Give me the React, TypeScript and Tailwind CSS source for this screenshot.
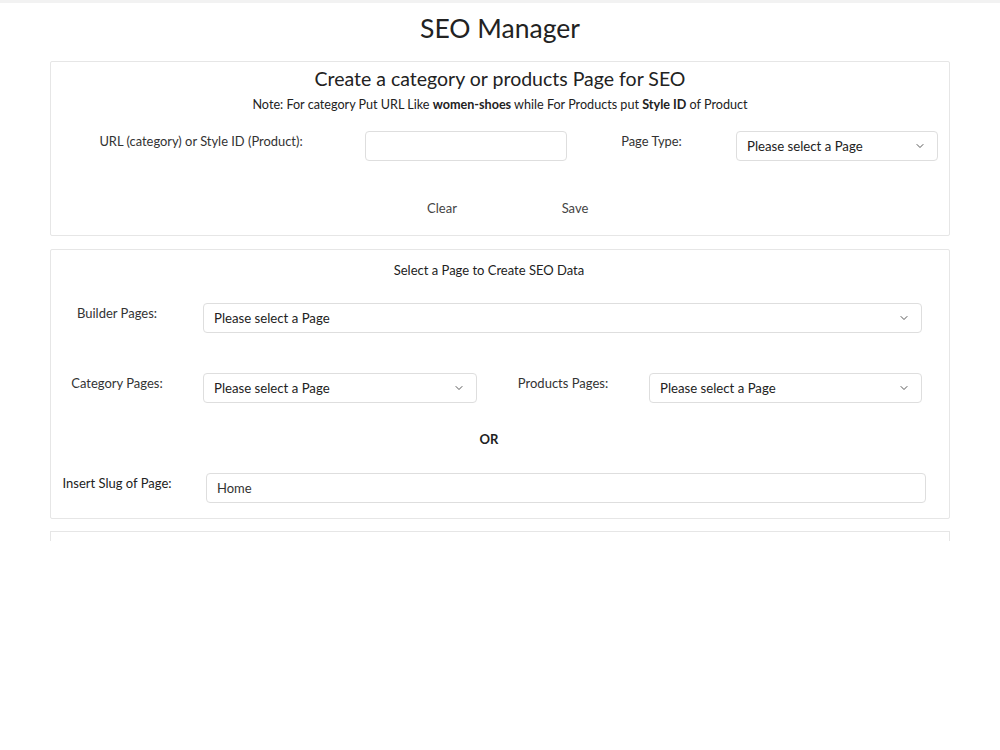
import { ChevronDown } from "lucide-react";

const font = { fontFamily: "Lato, 'Noto Sans', sans-serif" };

function Select({ className = "" }: { className?: string }) {
    return (
        <div className={`h-[30px] border border-[#dedede] rounded-[4px] bg-white flex items-center justify-between pl-[10px] pr-[11px] ${className}`}>
            <span className="text-[13.2px] text-[#222] pt-[1px]">Please select a Page</span>
            <ChevronDown size={12} strokeWidth={1.8} className="text-[#444]" />
        </div>
    );
}

export default function App() {
    return (
        <div className="w-[1000px] min-h-[750px] bg-white text-[#333]" style={font}>
            <div className="h-[3px] bg-[#f2f2f2]" />

            <h1 className="text-center text-[26.5px] leading-[34px] text-[#222] mt-[8px] mb-[16px]">SEO Manager</h1>

            <div className="mx-[50px]">
                {/* Create page card */}
                <div className="border border-[#e6e6e6] rounded-[2px] px-[11px] pt-[3px] pb-[17px]">
                    <h2 className="text-center text-[19.5px] leading-[28px] text-[#222]">Create a category or products Page for SEO</h2>
                    <p className="text-center text-[12.6px] leading-[16px] text-[#222] mt-[4px]">
                        Note: For category Put URL Like <b>women-shoes</b> while For Products put <b>Style ID</b> of Product
                    </p>

                    <div className="flex mt-[18px]">
                        <div className="w-[278px] mr-[25px] text-center text-[12.9px] leading-[21px]">URL (category) or Style ID (Product):</div>
                        <div className="w-[202px] h-[30px] border border-[#dedede] rounded-[4px]" />
                        <div className="w-[169px] text-center text-[12.9px] leading-[21px]">Page Type:</div>
                        <Select className="w-[202px]" />
                    </div>

                    <div className="flex justify-center pl-[17px] mt-[37px] gap-[53px] text-[13px] leading-[20px] text-[#444]">
                        <button className="w-[80px] text-center">Clear</button>
                        <button className="w-[80px] text-center">Save</button>
                    </div>
                </div>

                {/* Select page card */}
                <div className="border border-[#e6e6e6] rounded-[2px] mt-[13px] px-[11px] pt-[12px] pb-[15px]">
                    <p className="text-center text-[13px] leading-[16px] text-[#222] pr-[22px]">Select a Page to Create SEO Data</p>

                    <div className="flex mt-[25px]">
                        <div className="w-[110px] text-center text-[13px] leading-[21px]">Builder Pages:</div>
                        <Select className="ml-[31px] w-[719px]" />
                    </div>

                    <div className="flex mt-[40px]">
                        <div className="w-[110px] text-center text-[13px] leading-[21px]">Category Pages:</div>
                        <Select className="ml-[31px] w-[274px]" />
                        <div className="w-[172px] text-center text-[13px] leading-[21px]">Products Pages:</div>
                        <Select className="w-[273px]" />
                    </div>

                    <div className="text-center text-[13px] leading-[20px] font-bold text-[#222] mt-[26px] pr-[22px]">OR</div>

                    <div className="flex mt-[24px]">
                        <div className="w-[110px] text-center text-[13px] leading-[21px] text-[#222]">Insert Slug of Page:</div>
                        <div className="ml-[34px] w-[720px] h-[30px] border border-[#dedede] rounded-[4px] flex items-center pl-[10px] pt-[1px] text-[13px] text-[#333]">Home</div>
                    </div>
                </div>

                {/* next card, cut off */}
                <div className="border-t border-x border-[#e6e6e6] mt-[12px] h-[10px]" />
            </div>
        </div>
    );
}
